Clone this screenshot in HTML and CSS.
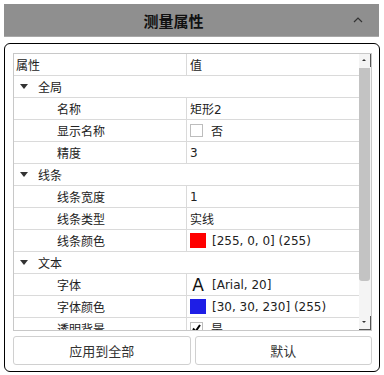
FILE: index.html
```html
<!DOCTYPE html>
<html lang="zh">
<head>
    <meta charset="UTF-8">
    <meta name="viewport" content="width=device-width, initial-scale=1.0">
    <title>测量属性</title>
    <link rel="stylesheet" href="styles.css">
</head>
<body>
    <div class="title-bar">
        <span class="title">测量属性</span>
        <span class="collapse">
            <svg width="10" height="6" viewBox="0 0 10 6"><polyline points="1,5 5,1 9,5" fill="none" stroke="#333" stroke-width="1.2"/></svg>
        </span>
    </div>

    <div class="panel">
        <div class="tree">
            <div class="tree-view">
                <div class="row head">
                    <div class="key">属性</div>
                    <div class="val">值</div>
                </div>

                <div class="row group"><span class="arrow"></span>全局</div>
                <div class="row">
                    <div class="key child">名称</div>
                    <div class="val">矩形2</div>
                </div>
                <div class="row">
                    <div class="key child">显示名称</div>
                    <div class="val"><span class="check"></span>否</div>
                </div>
                <div class="row">
                    <div class="key child">精度</div>
                    <div class="val">3</div>
                </div>

                <div class="row group"><span class="arrow"></span>线条</div>
                <div class="row">
                    <div class="key child">线条宽度</div>
                    <div class="val">1</div>
                </div>
                <div class="row">
                    <div class="key child">线条类型</div>
                    <div class="val">实线</div>
                </div>
                <div class="row">
                    <div class="key child">线条颜色</div>
                    <div class="val"><span class="swatch red"></span>[255, 0, 0] (255)</div>
                </div>

                <div class="row group"><span class="arrow"></span>文本</div>
                <div class="row">
                    <div class="key child">字体</div>
                    <div class="val"><span class="font-icon">A</span>[Arial, 20]</div>
                </div>
                <div class="row">
                    <div class="key child">字体颜色</div>
                    <div class="val"><span class="swatch blue"></span>[30, 30, 230] (255)</div>
                </div>
                <div class="row">
                    <div class="key child">透明背景</div>
                    <div class="val">
                        <span class="check checked">
                            <svg width="11" height="11" viewBox="0 0 11 11"><path d="M2 5.5 L4.5 8.5 L9 2" fill="none" stroke="#000" stroke-width="2"/></svg>
                        </span>是
                    </div>
                </div>
            </div>

            <div class="scrollbar">
                <div class="sb-btn up"></div>
                <div class="sb-track"><div class="sb-thumb"></div></div>
                <div class="sb-btn down"></div>
            </div>
        </div>

        <div class="buttons">
            <button class="btn">应用到全部</button>
            <button class="btn">默认</button>
        </div>
    </div>
</body>
</html>
```

FILE: styles.css
```css
body {
    margin: 0;
    background-color: #fff;
    color: #222;
    font-family: "DejaVu Sans", "Noto Sans CJK SC", sans-serif;
    font-size: 12px;
}
.title-bar {
    display: flex;
    align-items: center;
    height: 32px;
    margin: 4px 5px 0 4px;
    background-color: #8f8f8f;
    border-bottom: 1px solid #a8a8a8;
}
.title {
    flex: 1;
    text-align: center;
    font-family: "Noto Sans CJK SC", sans-serif;
    font-size: 15px;
    font-weight: bold;
    color: #111;
}
.collapse {
    width: 30px;
    display: flex;
    justify-content: center;
    padding-right: 6px;
}
.panel {
    margin: 6px 4px 2px 4px;
    border: 1px solid #000;
    border-radius: 6px;
    padding: 9px 7px 6px 8px;
}
.tree {
    display: flex;
    height: 278px;
    box-sizing: border-box;
    border: 1px solid #c8c8c8;
    overflow: hidden;
}
.tree-view {
    flex: 1;
    overflow: hidden;
}
.row {
    display: flex;
    align-items: center;
    height: 22px;
    box-sizing: border-box;
    border-bottom: 1px solid #dadada;
}
.key {
    width: 173px;
    height: 100%;
    display: flex;
    align-items: center;
    padding-left: 2px;
    box-sizing: border-box;
    border-right: 1px solid #dadada;
}
.key.child {
    padding-left: 43px;
}
.val {
    flex: 1;
    display: flex;
    align-items: center;
    padding-left: 3px;
}
.group {
    padding-left: 6px;
}
.arrow {
    width: 0;
    height: 0;
    border-left: 4px solid transparent;
    border-right: 4px solid transparent;
    border-top: 5px solid #333;
    margin-right: 10px;
}
.check {
    width: 13px;
    height: 13px;
    box-sizing: border-box;
    border: 1px solid #bdbdbd;
    background-color: #fff;
    margin-right: 8px;
    display: flex;
    align-items: center;
    justify-content: center;
}
.swatch {
    width: 16px;
    height: 15px;
    margin-right: 6px;
}
.swatch.red {
    background-color: #ff0000;
}
.swatch.blue {
    background-color: #1e1ee6;
}
.font-icon {
    font-size: 17px;
    width: 16px;
    margin-right: 6px;
    text-align: center;
    color: #111;
}
.scrollbar {
    width: 12px;
    display: flex;
    flex-direction: column;
    background-color: #f4f4f4;
}
.sb-btn {
    height: 13px;
    position: relative;
    border-right: 1px solid #555;
}
.sb-btn.up::after, .sb-btn.down::after {
    content: "";
    position: absolute;
    left: 3px;
    border-left: 2px solid transparent;
    border-right: 2px solid transparent;
}
.sb-btn.up::after {
    top: 5px;
    border-bottom: 2px solid #333;
}
.sb-btn.down::after {
    top: 5px;
    border-top: 2px solid #333;
}
.sb-btn.down {
    border-bottom: 1px solid #555;
}
.sb-track {
    flex: 1;
    padding: 1px 0;
}
.sb-thumb {
    height: 213px;
    margin: 0 1px 0 0;
    background-color: #c3c3c3;
    border-radius: 0 0 3px 3px;
}
.buttons {
    display: flex;
    gap: 4px;
    margin-top: 5px;
}
.btn {
    flex: 1;
    height: 29px;
    background-color: #fff;
    border: 1px solid #d0d0d0;
    border-radius: 3px;
    font-family: "DejaVu Sans", "Noto Sans CJK SC", sans-serif;
    font-size: 13px;
    color: #333;
}
```
